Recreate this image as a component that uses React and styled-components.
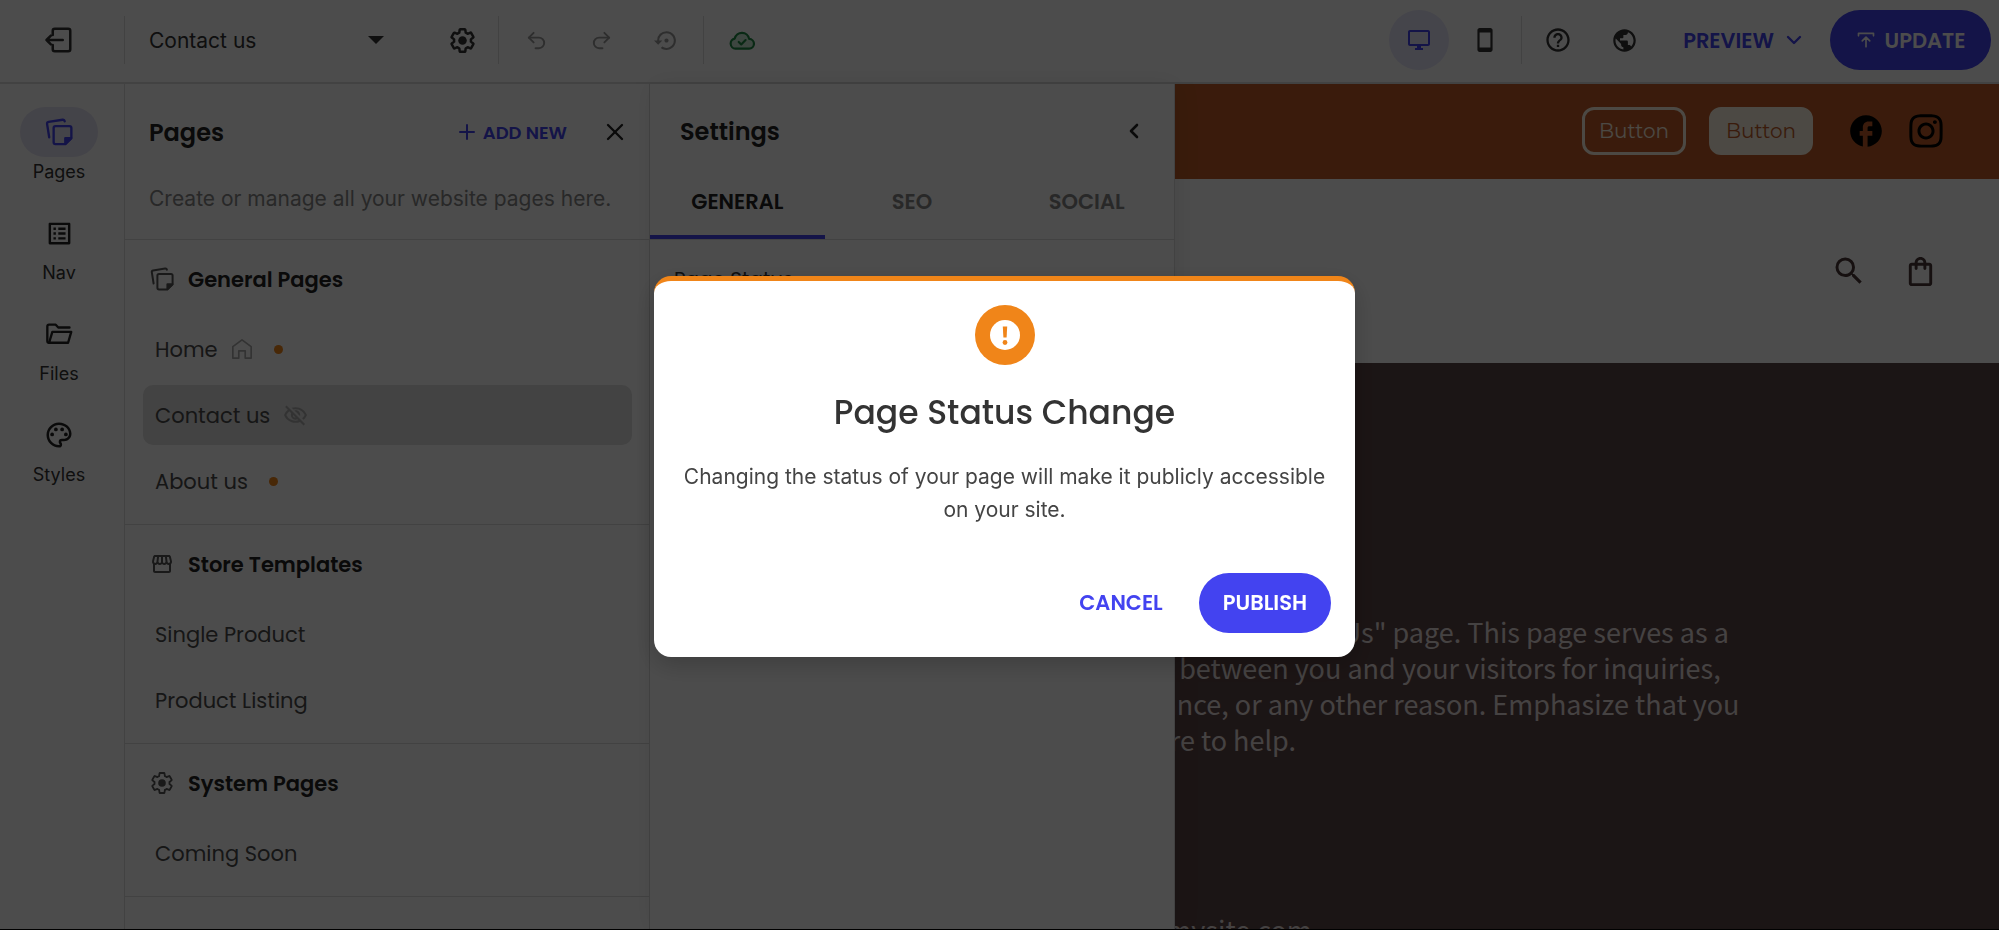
import React from "react";
import styled, { createGlobalStyle } from "styled-components";
import {
  MdOutlineSettingsBackupRestore,
  MdOutlineDesktopWindows,
  MdOutlineStayCurrentPortrait,
  MdHelpOutline,
  MdPublic,
  MdOutlineListAlt,
  MdOutlinePalette,
  MdOutlineStorefront,
  MdOutlineVisibilityOff,
  MdFacebook,
  MdSearch,
  MdOutlineShoppingBag,
} from "react-icons/md";
import { FaInstagram } from "react-icons/fa";
import { Undo2, Redo2, ChevronDown, ChevronLeft, Plus, X } from "lucide-react";

const GlobalStyle = createGlobalStyle`
  * { box-sizing: border-box; }
  body { margin: 0; background: #fff; }
  button, select { font: inherit; color: inherit; }
  h1, h2, h3, p, ul { margin: 0; padding: 0; }
  svg { display: block; flex: none; }
`;

const brand = "#4343f0";
const line = "#dcdcdc";
const display = `"Poppins", "Inter", "Open Sans", sans-serif`;

const App_ = styled.div`
  height: 100vh;
  overflow: hidden;
  display: flex;
  flex-direction: column;
  font-family: "Inter", "Liberation Sans", sans-serif;
  color: #333;
  background: #fff;
`;

const Toolbar = styled.header`
  flex: none;
  height: 84px;
  display: flex;
  align-items: center;
  border-bottom: 2px solid ${line};
  padding: 0 8px 2px 0;
`;

const Divider = styled.span`
  width: 1px;
  height: 48px;
  background: ${line};
`;

const IconButton = styled.button`
  width: ${(p) => p.$w || 71}px;
  height: 60px;
  padding: 0;
  border: 0;
  border-radius: 30px;
  display: flex;
  align-items: center;
  justify-content: center;
  background: ${(p) => (p.$active ? "#e8e7fb" : "transparent")};
  color: ${(p) => p.$color || "#333"};
`;

const ExitCell = styled.div`
  width: 124px;
  display: flex;
  justify-content: center;
  padding-right: 6px;
`;

const PageSelect = styled.label`
  position: relative;
  width: 302px;
  display: flex;
  align-items: center;
  select {
    width: 100%;
    height: 48px;
    padding: 0 24px;
    border: 0;
    background: transparent;
    appearance: none;
    font-size: 21px;
  }
  svg {
    position: absolute;
    right: 43px;
    pointer-events: none;
  }
`;

const Spacer = styled.span`
  flex: 1;
`;

const PreviewButton = styled.button`
  display: flex;
  align-items: center;
  gap: 8px;
  height: 60px;
  padding: 0 24px 0 29px;
  border: 0;
  background: transparent;
  color: ${brand};
  font: 600 21px ${display};
`;

const PillButton = styled.button`
  display: flex;
  align-items: center;
  justify-content: center;
  gap: 9px;
  height: 60px;
  padding: 0 24px;
  border: 0;
  border-radius: 30px;
  background: ${(p) => (p.$plain ? "transparent" : brand)};
  color: ${(p) => (p.$plain ? brand : "#fff")};
  font: 600 21px ${display};
  min-width: ${(p) => p.$min || 0}px;
`;

const Workspace = styled.div`
  flex: 1;
  min-height: 0;
  display: flex;
`;

const Rail = styled.nav`
  flex: none;
  width: 125px;
  border-right: 1px solid ${line};
  padding: 23px 6px 0 0;
  display: flex;
  flex-direction: column;
  align-items: center;
  gap: 21px;
`;

const RailItem = styled.a`
  display: flex;
  flex-direction: column;
  align-items: center;
  color: #333;
  text-decoration: none;
  font-size: 18px;
  line-height: 30px;
`;

const RailIcon = styled.span`
  width: 78px;
  height: 50px;
  border-radius: 25px;
  display: flex;
  align-items: center;
  justify-content: center;
  color: ${(p) => (p.$active ? brand : "#222")};
  background: ${(p) => (p.$active ? "#e5e3f5" : "transparent")};
`;

const Panel = styled.aside`
  flex: none;
  width: 525px;
  border-right: 1px solid ${line};
  background: #fff;
`;

const PanelIntro = styled.div`
  height: 156px;
  padding: 24px 20px 0 24px;
  border-bottom: 1px solid ${line};
  p {
    margin-top: 29px;
    font-size: 21px;
    line-height: 28px;
    color: #888;
    white-space: nowrap;
  }
`;

const PanelHead = styled.div`
  height: 48px;
  display: flex;
  align-items: center;
  h2 {
    flex: 1;
    font: 600 24px ${display};
    color: #222;
  }
`;

const AddButton = styled.button`
  display: flex;
  align-items: center;
  gap: 4px;
  padding: 0;
  margin-right: 34px;
  border: 0;
  background: none;
  color: ${brand};
  font: 600 18px ${display};
`;

const PlainIcon = styled.button`
  padding: 0;
  border: 0;
  background: none;
  color: #222;
`;

const Section = styled.section`
  padding: 15px 17px 13px 18px;
  border-bottom: 1px solid ${line};
`;

const SectionTitle = styled.h3`
  display: flex;
  align-items: center;
  gap: 14px;
  height: 48px;
  padding-left: 7px;
  margin-bottom: 16px;
  font: 600 21px ${display};
  color: #222;
  svg { color: #555; }
`;

const List = styled.ul`
  list-style: none;
  display: flex;
  flex-direction: column;
  gap: 6px;
`;

const PageLink = styled.a`
  display: flex;
  align-items: center;
  gap: 13px;
  height: 60px;
  padding: 0 12px;
  border-radius: 10px;
  background: ${(p) => (p.$active ? "#e0e0e0" : "transparent")};
  color: #4c4c4c;
  text-decoration: none;
  font: 400 21px ${display};
  svg { color: #aaa; }
`;

const Dot = styled.span`
  width: 9px;
  height: 9px;
  margin: 0 8px;
  border-radius: 50%;
  background: #f08519;
`;

const Settings = styled(Panel)`
  position: relative;
  z-index: 1;
  box-shadow: 2px 0 24px rgba(0, 0, 0, 0.08);
`;

const SettingsHead = styled(PanelHead)`
  margin-top: 23px;
  padding: 0 28px 0 30px;
`;

const Tabs = styled.div`
  display: grid;
  grid-template-columns: repeat(3, 1fr);
  height: 85px;
  border-bottom: 1px solid ${line};
`;

const Tab = styled.button`
  padding: 16px 0 4px;
  border: 0;
  border-bottom: 4px solid ${(p) => (p.$active ? brand : "transparent")};
  background: none;
  color: ${(p) => (p.$active ? "#222" : "#888")};
  font: 600 21px ${display};
`;

const FieldTitle = styled.h3`
  padding: 24px;
  font: 400 20px ${display};
  line-height: 30px;
`;

/* The site preview slides in underneath the settings panel. */
const Canvas = styled.main`
  flex: 1;
  min-width: 0;
  margin-left: -110px;
  display: flex;
  flex-direction: column;
  overflow: hidden;
`;

const PromoBar = styled.div`
  flex: none;
  height: 95px;
  padding: 0 54px 2px 0;
  display: flex;
  align-items: center;
  justify-content: flex-end;
  background: #c15d28;
  color: #000;
`;

const SiteButton = styled.button`
  width: 104px;
  height: 48px;
  margin-right: 23px;
  border: 3px solid #fff3e3;
  border-radius: 12px;
  background: ${(p) => (p.$solid ? "#fff3e3" : "transparent")};
  color: ${(p) => (p.$solid ? "#c15d28" : "#fff3e3")};
  font: 400 20px "Montserrat", "Open Sans", sans-serif;
  padding: 0;
`;

const SocialLink = styled.a`
  color: #000;
  margin-left: ${(p) => p.$gap}px;
`;

const SiteHeader = styled.div`
  flex: none;
  height: 184px;
  padding-right: 61px;
  display: flex;
  align-items: center;
  justify-content: flex-end;
  gap: 36px;
  button { color: #4a3838; }
`;

const Hero = styled.section`
  flex: 1;
  min-height: 0;
  padding: 251px 0 0 27px;
  background: #5d4646;
  color: #e6dede;
  font-family: "Source Sans Pro", "Noto Sans CJK SC", sans-serif;
  font-size: 27px;
  line-height: 36px;
  overflow: hidden;
  white-space: nowrap;
  p + p { margin-top: 154px; }
`;

const Overlay = styled.div`
  position: fixed;
  inset: 0;
  z-index: 10;
  display: flex;
  align-items: center;
  justify-content: center;
  padding: 3px 0 0 10px;
  background: rgba(0, 0, 0, 0.7);
  border-bottom: 1px solid #000;
`;

const Dialog = styled.div`
  width: 701px;
  padding: 24px;
  border-top: 5px solid #f08519;
  border-radius: 17px;
  background: #fff;
  display: flex;
  flex-direction: column;
  align-items: center;
  text-align: center;
  font-family: "Inter", "Liberation Sans", sans-serif;
  box-shadow: 0 8px 24px rgba(0, 0, 0, 0.2);
`;

const Badge = styled.span`
  width: 60px;
  height: 60px;
  border-radius: 50%;
  display: flex;
  align-items: center;
  justify-content: center;
  background: #f08519;
`;

const DialogTitle = styled.h1`
  margin-top: 24px;
  font: 500 33px ${display};
  line-height: 48px;
  color: #333;
`;

const DialogText = styled.p`
  margin-top: 23px;
  font-size: 21px;
  line-height: 33px;
  color: #444;
`;

const Actions = styled.div`
  align-self: stretch;
  display: flex;
  justify-content: flex-end;
  gap: 12px;
  margin-top: 47px;
`;

const Svg = ({ size, children, sw = 2 }) => (
  <svg width={size} height={size} viewBox="0 0 24 24" fill="none" stroke="currentColor"
    strokeWidth={sw} strokeLinejoin="round" strokeLinecap="round" aria-hidden="true">
    {children}
  </svg>
);

const GearIcon = ({ size, sw }) => (
  <Svg size={size} sw={sw}>
    <path d="M19.43 12.98c.04-.32.07-.64.07-.98 0-.34-.03-.66-.07-.98l2.11-1.65c.19-.15.24-.42.12-.64l-2-3.46a.5.5 0 0 0-.61-.22l-2.49 1c-.52-.4-1.08-.73-1.69-.98l-.38-2.65A.488.488 0 0 0 14 2h-4c-.25 0-.46.18-.49.42l-.38 2.65c-.61.25-1.17.59-1.69.98l-2.49-1a.566.566 0 0 0-.61.22l-2 3.46c-.13.22-.07.49.12.64l2.11 1.65c-.04.32-.07.65-.07.98 0 .33.03.66.07.98l-2.11 1.65c-.19.15-.24.42-.12.64l2 3.46a.5.5 0 0 0 .61.22l2.49-1c.52.4 1.08.73 1.69.98l.38 2.65c.03.24.24.42.49.42h4c.25 0 .46-.18.49-.42l.38-2.65c.61-.25 1.17-.59 1.69-.98l2.49 1a.5.5 0 0 0 .61-.22l2-3.46c.12-.22.07-.49-.12-.64z" />
    <circle cx="12" cy="12" r="3.800" fill="currentColor" stroke="none" />
  </Svg>
);

const PagesIcon = ({ size, sw }) => (
  <Svg size={size} sw={sw}>
    <path d="M3.600 16.500 1.800 5.200a1.600 1.600 0 0 1 1.300-1.800l12-1.900a1.600 1.600 0 0 1 1.800 1.300" />
    <path d="M9 7h12a1.600 1.600 0 0 1 1.600 1.600v8.600L17.400 22.400H9a1.600 1.600 0 0 1-1.600-1.600V8.600A1.600 1.600 0 0 1 9 7z" />
    <path d="M22.400 17.200h-5v5z" fill="currentColor" />
  </Svg>
);

const HouseIcon = () => (
  <Svg size={22} sw={1.800}>
    <path d="M2 9.500 12 2l10 7.500V22h-6.500v-8h-7v8H2z" />
  </Svg>
);

const FolderIcon = () => (
  <Svg size={28}>
    <path d="M3.500 19.500a1.500 1.500 0 0 1-1.500-1.500V5.500A1.500 1.500 0 0 1 3.500 4h5.700l2.200 2.400H21" />
    <path d="M3.500 19.500 6.300 10.200H22.500l-2.700 9.300z" />
  </Svg>
);

const ExitIcon = () => (
  <Svg size={30}>
    <path d="M7 8V4.600A1.600 1.600 0 0 1 8.600 3h10.800A1.600 1.600 0 0 1 21 4.600v14.800a1.600 1.600 0 0 1-1.600 1.600H8.600A1.600 1.600 0 0 1 7 19.400V16" />
    <path d="M15 12H2M5.500 8.500 2 12l3.500 3.500" />
  </Svg>
);

const CloudIcon = () => (
  <Svg size={26}>
    <path d="M6 20a4.700 4.700 0 0 1-.7-9.300A6.800 6.800 0 0 1 18.600 11 4.500 4.500 0 0 1 18.500 20z" fill="#2fa85a" fillOpacity=".25" />
    <path d="m9 13.800 2.300 2.300 4-4" />
  </Svg>
);

const PublishIcon = () => (
  <Svg size={20}>
    <path d="M3 7V4h18v3M12 20V9M7.500 13 12 8.500l4.500 4.500" />
  </Svg>
);

const WarningIcon = () => (
  <svg width="30" height="30" viewBox="0 0 30 30" aria-hidden="true">
    <circle cx="15" cy="15" r="15" fill="#fff" />
    <path d="M12.800 6.500h4.400l-.6 11h-3.200z" fill="#f08519" />
    <circle cx="15" cy="22.500" r="2.400" fill="#f08519" />
  </svg>
);

const rail = [
  ["Pages", <PagesIcon size={28} sw={2} />],
  ["Nav", <MdOutlineListAlt size={29} />],
  ["Files", <FolderIcon />],
  ["Styles", <MdOutlinePalette size={30} />],
];

const sections = [
  {
    title: "General Pages",
    icon: <PagesIcon size={24} sw={2} />,
    pages: [
      { name: "Home", icon: <HouseIcon />, draft: true },
      { name: "Contact us", icon: <MdOutlineVisibilityOff size={25} />, active: true },
      { name: "About us", draft: true },
    ],
  },
  {
    title: "Store Templates",
    icon: <MdOutlineStorefront size={24} />,
    pages: [{ name: "Single Product" }, { name: "Product Listing" }],
  },
  {
    title: "System Pages",
    icon: <GearIcon size={24} sw={1.800} />,
    pages: [{ name: "Coming Soon" }],
  },
];

export default function App() {
  return (
    <App_>
      <GlobalStyle />
      <Toolbar>
        <ExitCell>
          <IconButton aria-label="Exit editor"><ExitIcon /></IconButton>
        </ExitCell>
        <Divider />
        <PageSelect>
          <select aria-label="Page" defaultValue="Contact us">
            <option>Contact us</option>
          </select>
          <svg width="16" height="8" viewBox="0 0 16 8" fill="#333" aria-hidden="true"><path d="M0 0h16L8 8z" /></svg>
        </PageSelect>
        <IconButton aria-label="Page settings"><GearIcon size={27} sw={2.200} /></IconButton>
        <Divider />
        <IconButton $w={74} $color="#999" aria-label="Undo"><Undo2 size={23} /></IconButton>
        <IconButton $w={56} $color="#999" aria-label="Redo"><Redo2 size={23} /></IconButton>
        <IconButton $w={74} $color="#999" aria-label="History"><MdOutlineSettingsBackupRestore size={25} /></IconButton>
        <Divider />
        <IconButton $w={76} $color="#1f8a45" aria-label="Saved"><CloudIcon /></IconButton>
        <Spacer />
        <IconButton $w={60} $active $color={brand} aria-label="Desktop view"><MdOutlineDesktopWindows size={24} /></IconButton>
        <IconButton $w={72} aria-label="Mobile view"><MdOutlineStayCurrentPortrait size={26} /></IconButton>
        <Divider />
        <IconButton $w={72} aria-label="Help"><MdHelpOutline size={28} /></IconButton>
        <IconButton $w={60} aria-label="Language"><MdPublic size={27} /></IconButton>
        <PreviewButton>PREVIEW <ChevronDown size={24} strokeWidth={2.400} /></PreviewButton>
        <PillButton $min={161}><PublishIcon />UPDATE</PillButton>
      </Toolbar>

      <Workspace>
        <Rail>
          {rail.map(([label, icon], i) => (
            <RailItem href="#" key={label}>
              <RailIcon $active={i === 0}>{icon}</RailIcon>
              {label}
            </RailItem>
          ))}
        </Rail>

        <Panel>
          <PanelIntro>
            <PanelHead>
              <h2>Pages</h2>
              <AddButton><Plus size={24} />ADD NEW</AddButton>
              <PlainIcon aria-label="Close"><X size={28} strokeWidth={2} /></PlainIcon>
            </PanelHead>
            <p>Create or manage all your website pages here.</p>
          </PanelIntro>
          {sections.map((s) => (
            <Section key={s.title}>
              <SectionTitle>{s.icon}{s.title}</SectionTitle>
              <List>
                {s.pages.map((p) => (
                  <li key={p.name}>
                    <PageLink href="#" $active={p.active}>
                      {p.name}
                      {p.icon}
                      {p.draft && <Dot />}
                    </PageLink>
                  </li>
                ))}
              </List>
            </Section>
          ))}
        </Panel>

        <Settings>
          <SettingsHead>
            <h2>Settings</h2>
            <PlainIcon aria-label="Collapse"><ChevronLeft size={24} strokeWidth={2.600} /></PlainIcon>
          </SettingsHead>
          <Tabs role="tablist">
            <Tab role="tab" $active>GENERAL</Tab>
            <Tab role="tab">SEO</Tab>
            <Tab role="tab">SOCIAL</Tab>
          </Tabs>
          <FieldTitle>Page Status</FieldTitle>
        </Settings>

        <Canvas>
          <PromoBar>
            <SiteButton>Button</SiteButton>
            <SiteButton $solid>Button</SiteButton>
            <SocialLink href="#" $gap={11} aria-label="Facebook"><MdFacebook size={38} /></SocialLink>
            <SocialLink href="#" $gap={22} aria-label="Instagram"><FaInstagram size={38} /></SocialLink>
          </PromoBar>
          <SiteHeader>
            <PlainIcon aria-label="Search"><MdSearch size={36} /></PlainIcon>
            <PlainIcon aria-label="Bag"><MdOutlineShoppingBag size={35} /></PlainIcon>
          </SiteHeader>
          <Hero>
            <p>
              This is the "Contact Us" page. This page serves as a<br />
              bridge between you and your visitors for inquiries,<br />
              assistance, or any other reason. Emphasize that you<br />
              are here to help.
            </p>
            <p>info@mysite.com</p>
          </Hero>
        </Canvas>
      </Workspace>

      <Overlay>
        <Dialog role="dialog" aria-modal="true" aria-labelledby="dialog-title">
          <Badge><WarningIcon /></Badge>
          <DialogTitle id="dialog-title">Page Status Change</DialogTitle>
          <DialogText>
            Changing the status of your page will make it publicly accessible on your site.
          </DialogText>
          <Actions>
            <PillButton $plain>CANCEL</PillButton>
            <PillButton>PUBLISH</PillButton>
          </Actions>
        </Dialog>
      </Overlay>
    </App_>
  );
}
